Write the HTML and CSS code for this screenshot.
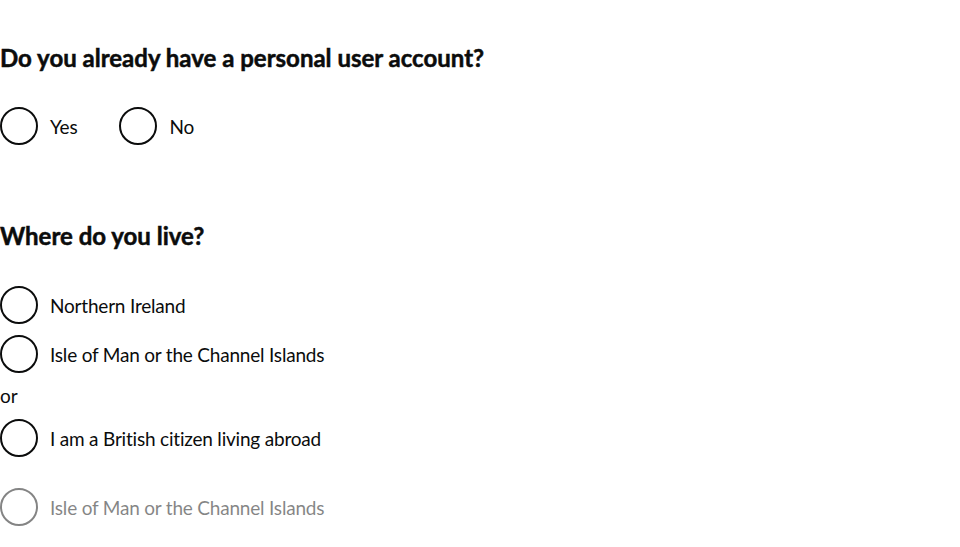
FILE: index.html
```html
<!DOCTYPE html>
<html lang="en">
<head>
<meta charset="utf-8">
<title>Radios</title>
<link rel="stylesheet" href="styles.css">
</head>
<body>
<main class="page">
  <fieldset class="fieldset fieldset-account">
    <legend class="legend">Do you already have a personal user account?</legend>
    <div class="radios radios-inline">
      <label class="radio">
        <input class="radio-input" type="radio" name="account" value="yes">
        <span class="radio-circle"></span>
        <span class="radio-label">Yes</span>
      </label>
      <label class="radio">
        <input class="radio-input" type="radio" name="account" value="no">
        <span class="radio-circle"></span>
        <span class="radio-label">No</span>
      </label>
    </div>
  </fieldset>

  <fieldset class="fieldset fieldset-live">
    <legend class="legend">Where do you live?</legend>
    <div class="radios">
      <label class="radio">
        <input class="radio-input" type="radio" name="live" value="ni">
        <span class="radio-circle"></span>
        <span class="radio-label">Northern Ireland</span>
      </label>
      <label class="radio">
        <input class="radio-input" type="radio" name="live" value="iom">
        <span class="radio-circle"></span>
        <span class="radio-label">Isle of Man or the Channel Islands</span>
      </label>
      <div class="radios-divider">or</div>
      <label class="radio">
        <input class="radio-input" type="radio" name="live" value="abroad">
        <span class="radio-circle"></span>
        <span class="radio-label">I am a British citizen living abroad</span>
      </label>
      <label class="radio radio-disabled">
        <input class="radio-input" type="radio" name="live" value="iom2" disabled>
        <span class="radio-circle"></span>
        <span class="radio-label">Isle of Man or the Channel Islands</span>
      </label>
    </div>
  </fieldset>
</main>
</body>
</html>
```

FILE: styles.css
```css
* { box-sizing: border-box; }

html, body {
  margin: 0;
  padding: 0;
  background: #ffffff;
}

body {
  font-family: "Lato", "Liberation Sans", sans-serif;
  color: #0b0c0c;
  -webkit-font-smoothing: antialiased;
}

.page {
  padding-top: 43px;
}

.fieldset {
  margin: 0;
  padding: 0;
  border: 0;
  min-width: 0;
}

.fieldset-live {
  margin-top: 75px;
}

.legend {
  padding: 0;
  font-size: 24px;
  line-height: 30px;
  font-weight: 700;
  -webkit-text-stroke: 0.5px #0b0c0c;
  margin-bottom: 33px;
}

.fieldset-live .legend {
  margin-bottom: 34px;
}

.radios {
  display: flex;
  flex-direction: column;
}

.radios-inline {
  flex-direction: row;
  gap: 27px;
}

.radio {
  display: flex;
  align-items: center;
  height: 40px;
  margin-bottom: 9px;
  font-size: 19px;
  line-height: 25px;
  letter-spacing: -0.2px;
  cursor: pointer;
}

.radios-inline .radio {
  margin-bottom: 0;
}

.radio-input {
  position: absolute;
  opacity: 0;
  width: 0;
  height: 0;
  margin: 0;
}

.radio-circle {
  flex: none;
  width: 38px;
  height: 38px;
  border: 2px solid #0b0c0c;
  border-radius: 50%;
}

.radio-label {
  padding: 0 15px 0 12px;
}

.radios-divider {
  font-size: 19px;
  line-height: 25px;
  margin-bottom: 10px;
}

.radio-disabled {
  margin-top: 20px;
  opacity: 0.5;
  cursor: default;
}
```
